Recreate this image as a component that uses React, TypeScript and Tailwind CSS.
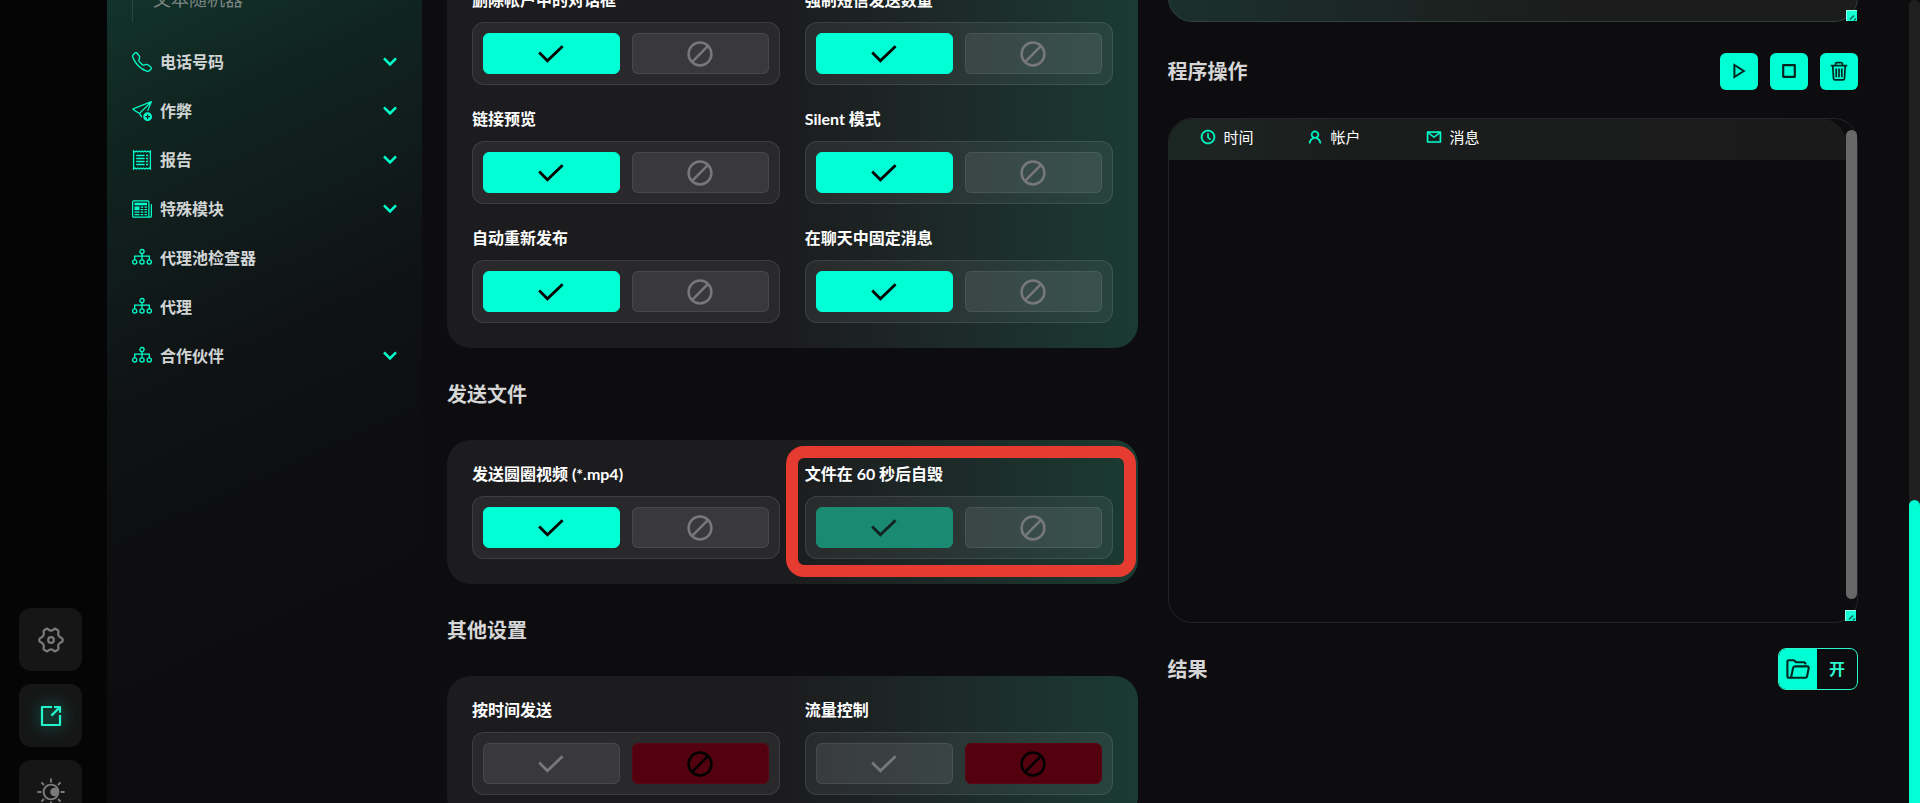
import type { ReactNode } from "react";
import { BsNewspaper, BsSendPlus, BsTelephone } from "react-icons/bs";
import { AiOutlineClockCircle, AiOutlineMail, AiOutlineUser } from "react-icons/ai";

function CheckIcon() {
  return (
    <svg viewBox="0 0 26 18" className="h-[18px] w-[26px]" fill="none" stroke="currentColor" strokeWidth="2.8" aria-hidden="true">
      <path d="M1.2 7.6 9.4 15.8 24.6 1.2" />
    </svg>
  );
}

function BanIcon() {
  return (
    <svg viewBox="0 0 26 26" className="h-[26px] w-[26px]" fill="none" stroke="currentColor" strokeWidth="2.5" aria-hidden="true">
      <circle cx="13" cy="13" r="11.4" />
      <path d="M5.2 20.8 20.8 5.2" />
    </svg>
  );
}

function ChevronIcon() {
  return (
    <svg viewBox="0 0 14 10" className="h-[10px] w-[14px]" fill="none" stroke="currentColor" strokeWidth="2.6" aria-hidden="true">
      <path d="M1 1.4 7 7.4 13 1.4" />
    </svg>
  );
}

function TreeIcon() {
  return (
    <svg viewBox="0 0 20 20" className="h-5 w-5" fill="none" stroke="currentColor" strokeWidth="1.3" aria-hidden="true">
      <circle cx="10" cy="3.6" r="2.1" />
      <circle cx="2.7" cy="14" r="2.1" />
      <circle cx="10" cy="14" r="2.1" />
      <circle cx="17.3" cy="14" r="2.1" />
      <path d="M10 5.700v6.200M2.700 11.900V8.200h14.600v3.700" />
    </svg>
  );
}

function ReportIcon() {
  return (
    <svg viewBox="0 0 20 20" className="h-5 w-5" fill="none" stroke="currentColor" strokeWidth="1.3" aria-hidden="true">
      <path d="M1.6 1 3 2 4.4 1 5.8 2 7.2 1 8.6 2 10 1 11.4 2 12.8 1 14.2 2 15.6 1 17 2 18.4 1V19L17 18 15.6 19 14.2 18 12.8 19 11.4 18 10 19 8.6 18 7.2 19 5.8 18 4.4 19 3 18 1.6 19Z" />
      <path d="M4.2 5.5h8.400M4.2 8.500h8.400M4.2 11.500h8.400M4.2 14.500h8.400M14 5.500h2.200M14 8.500h2.200M14 11.500h2.200M14 14.500h2.200" />
    </svg>
  );
}

function GearIcon() {
  return (
    <svg viewBox="0 0 26 26" className="h-[26px] w-[26px]" fill="none" stroke="currentColor" strokeWidth="2.2" strokeLinejoin="round" aria-hidden="true">
      <path d="M8.6 1.8C10 1.2 10.3 3.6 13 3.6S16 1.2 17.4 1.8L20 3.4C21.2 4.3 19.4 6.4 20.6 8.5S23.7 10.6 24.4 11.6Q25 13 24.4 14.4C23.7 15.4 21.8 15.4 20.6 17.5S21.2 21.7 20 22.6L17.4 24.2C16 24.8 15.7 22.4 13 22.4S10 24.8 8.6 24.2L6 22.6C4.8 21.7 6.6 19.6 5.4 17.5S2.3 15.4 1.6 14.4Q1 13 1.6 11.6C2.3 10.6 4.2 10.6 5.4 8.5S4.8 4.3 6 3.4Z" />
      <circle cx="13" cy="13" r="2.8" />
    </svg>
  );
}

function ShareIcon() {
  return (
    <svg viewBox="0 0 22 22" className="h-[22px] w-[22px] text-[#24f5cd] drop-shadow-[0_0_8px_rgba(0,255,204,0.7)]" fill="none" stroke="currentColor" strokeWidth="2.2" strokeLinejoin="round" aria-hidden="true">
      <path d="M12 2H2v18h18V10" />
      <path d="M11.4 10.6 19.6 2.4M14 2h6v5.8" />
    </svg>
  );
}

function SunIcon() {
  return (
    <svg viewBox="0 0 28 28" className="h-7 w-7" fill="none" stroke="currentColor" strokeWidth="1.9" aria-hidden="true">
      <circle cx="14" cy="14" r="7.4" />
      <circle cx="17.4" cy="14" r="4.2" fill="currentColor" stroke="none" />
      <path d="M14 .4v4M14 23.600v4M.4 14h4M23.600 14h4M4.400 4.400 7 7M21 21l2.600 2.600M4.400 23.600 7 21M21 7l2.600-2.600" />
    </svg>
  );
}

function PlayIcon() {
  return (
    <svg viewBox="0 0 14 16" className="h-4 w-[14px]" fill="none" stroke="currentColor" strokeWidth="2" aria-hidden="true">
      <path d="M2.400 2v12L11.800 8Z" />
    </svg>
  );
}

function StopIcon() {
  return (
    <svg viewBox="0 0 14 14" className="h-[14px] w-[14px]" fill="none" stroke="currentColor" strokeWidth="2.200" strokeLinejoin="round" aria-hidden="true">
      <path d="M1.200 1.200h11.600v11.600H1.200Z" />
    </svg>
  );
}

function TrashIcon() {
  return (
    <svg viewBox="0 0 18 20" className="h-5 w-[18px]" fill="none" stroke="currentColor" strokeWidth="1.700" aria-hidden="true">
      <path d="M.8 4.600h16.400M5.600 4.400V2.600Q5.600 1.600 6.800 1.600h4.400q1.200 0 1.200 1v1.800M2.800 5l.7 12.400q.1 1.400 1.500 1.400h8q1.400 0 1.500-1.400L15.200 5M6.200 7.400v8.800M9 7.400v8.800M11.800 7.400v8.800" />
    </svg>
  );
}

function FolderIcon() {
  return (
    <svg viewBox="0 0 24 20" className="h-5 w-6" fill="none" stroke="currentColor" strokeWidth="2.100" strokeLinejoin="round" aria-hidden="true">
      <path d="M5 18.800H3.200Q1.400 18.800 1.400 17V2.800Q1.400 1.200 3 1.200h4.200q.8 0 1.400.6l1.400 1.400h7.600q1.800 0 1.800 1.800v.6" />
      <path d="M5 18.800 7 9.200Q7.400 7.400 9 7.400h12.200q1.900 0 1.500 1.900l-1.600 7.900q-.3 1.600-2 1.600Z" />
    </svg>
  );
}

function ResizeGrip() {
  return (
    <svg viewBox="0 0 11 11" className="absolute right-px bottom-px h-[11px] w-[11px]" aria-hidden="true">
      <path d="M0 0h11v11H0Z" fill="#15ffd5" />
      <path d="M.5 11V.5H11" fill="none" stroke="#9affec" />
      <path d="M4 9.500 8 5.500M8 10.500l2-2" stroke="#075c4c" strokeWidth="1.400" />
    </svg>
  );
}

type State = "on" | "off" | "dim";

function Toggle({ label, state = "on" }: { label: string; state?: State }) {
  const yes = {
    on: "border-[#00ffd4] bg-[#00ffd4] text-black",
    dim: "border-[#1b8a72] bg-[#1b8a72] text-[#12231f]",
    off: "border-white/8 bg-white/8 text-[#777879]",
  }[state];
  const no = state === "off" ? "border-[#5e0414] bg-[#53000f] text-black" : "border-white/8 bg-white/8 text-[#777879]";
  return (
    <div role="group" aria-label={label}>
      <p className="mb-[14px] text-base leading-[17px] font-bold text-white">{label}</p>
      <div className="grid grid-cols-2 gap-3 rounded-xl border border-white/10 bg-white/6 p-[10px]">
        <button type="button" aria-label="是" aria-pressed={state !== "off"} className={`flex h-[41px] items-center justify-center rounded-md border ${yes}`}>
          <CheckIcon />
        </button>
        <button type="button" aria-label="否" aria-pressed={state === "off"} className={`flex h-[41px] items-center justify-center rounded-md border ${no}`}>
          <BanIcon />
        </button>
      </div>
    </div>
  );
}

function Card({ children }: { children: ReactNode }) {
  return (
    <section className="grid grid-cols-2 gap-[25px] rounded-3xl bg-linear-to-r from-[#1c1c1e] from-50% via-[#1c2b29] via-75% to-[#1a3b32] p-[25px]">
      {children}
    </section>
  );
}

function Heading({ children }: { children: ReactNode }) {
  return <h2 className="flex items-center text-xl leading-5 font-bold text-[#d6d6d6]">{children}</h2>;
}

const menu: { label: string; icon: ReactNode; open?: boolean }[] = [
  { label: "电话号码", icon: <BsTelephone className="h-5 w-5" />, open: true },
  { label: "作弊", icon: <BsSendPlus className="h-5 w-5" />, open: true },
  { label: "报告", icon: <ReportIcon />, open: true },
  { label: "特殊模块", icon: <BsNewspaper className="h-5 w-5" />, open: true },
  { label: "代理池检查器", icon: <TreeIcon /> },
  { label: "代理", icon: <TreeIcon /> },
  { label: "合作伙伴", icon: <TreeIcon />, open: true },
];

function RailButton({ label, children }: { label: string; children: ReactNode }) {
  return (
    <button type="button" aria-label={label} className="flex size-[63px] shrink-0 items-center justify-center rounded-xl bg-[#161616] text-[#7b7b7b]">
      {children}
    </button>
  );
}

const action = "flex h-[37px] w-[38px] items-center justify-center rounded-md bg-[#00ffd4] text-[#03251f]";

export default function App() {
  return (
    <div className="flex h-screen overflow-hidden bg-[#0d0d0f] font-['Lato','Noto_Sans_CJK_SC',sans-serif]">
      <aside className="flex w-[107px] shrink-0 flex-col justify-end bg-[#050505] pl-[19px]">
        <div className="-mb-5 flex flex-col gap-[13px]">
          <RailButton label="设置"><GearIcon /></RailButton>
          <RailButton label="分享"><ShareIcon /></RailButton>
          <RailButton label="主题"><SunIcon /></RailButton>
        </div>
      </aside>

      <nav className="w-[315px] shrink-0 bg-[linear-gradient(155deg,#12332b_0%,#10241f_16%,#101b1b_30%,#0f1314_42%,#0e0f10_54%,#0d0d0f_75%)] px-[25px]">
        <div className="-mt-3 flex h-[34px] border-l border-white/10 pl-5">
          <a href="#random" className="text-lg leading-[22px] font-normal text-[#7c8583]">文本随机器</a>
        </div>
        <ul className="mt-[15px]">
          {menu.map((item) => (
            <li key={item.label}>
              <a href="#menu" className="flex h-[49px] items-center text-[#00ffcc]">
                {item.icon}
                <span className="ml-2 flex-1 text-base font-bold text-[#d0d4d4]">{item.label}</span>
                {item.open && <ChevronIcon />}
              </a>
            </li>
          ))}
        </ul>
      </nav>

      <main className="grid flex-1 grid-cols-2 gap-[30px] pr-[51px] pl-[25px]">
        <div className="-mt-[34px]">
          <Card>
            <Toggle label="删除帐户中的对话框" />
            <Toggle label="强制短信发送数量" />
            <Toggle label="链接预览" />
            <Toggle label="Silent 模式" />
            <Toggle label="自动重新发布" />
            <Toggle label="在聊天中固定消息" />
          </Card>
          <div className="flex h-[92px] items-center"><Heading>发送文件</Heading></div>
          <div className="relative">
            <Card>
              <Toggle label="发送圆圈视频 (*.mp4)" />
              <Toggle label="文件在 60 秒后自毁" state="dim" />
            </Card>
            <div className="pointer-events-none absolute top-[6px] right-[2px] bottom-[7px] left-[339px] rounded-[18px] border-[12px] border-[#e63b31]" />
          </div>
          <div className="flex h-[92px] items-center"><Heading>其他设置</Heading></div>
          <Card>
            <Toggle label="按时间发送" state="off" />
            <Toggle label="流量控制" state="off" />
          </Card>
        </div>

        <div>
          <div className="relative -mt-10 h-[62px]">
            <textarea aria-label="消息文本" className="block h-full w-full resize-none rounded-3xl border border-[#30403c] bg-linear-to-r from-[#1a302d] to-[#1b1c1b] to-60%" />
            <ResizeGrip />
          </div>
          <div className="flex h-24 items-center justify-between pt-[2px]">
            <Heading>程序操作</Heading>
            <div className="flex gap-3">
              <button type="button" aria-label="开始" className={action}><PlayIcon /></button>
              <button type="button" aria-label="停止" className={action}><StopIcon /></button>
              <button type="button" aria-label="删除" className={action}><TrashIcon /></button>
            </div>
          </div>
          <div className="relative h-[505px] rounded-3xl border border-[#242526]">
            <div className="mr-[11px] h-[41px] overflow-hidden rounded-t-3xl bg-linear-to-r from-[#1c2724] via-[#1b1d1d] via-25% to-[#1a1a1b]">
              <table className="w-full table-fixed text-left text-[15px] leading-5 text-white">
                <colgroup>
                  <col className="w-[138px]" />
                  <col className="w-[119px]" />
                  <col />
                </colgroup>
                <thead>
                  <tr>
                    <th className="py-2 pl-[31px] font-normal">
                      <span className="flex items-center gap-2"><AiOutlineClockCircle strokeWidth="36" className="size-4 text-[#00ffcc]" />时间</span>
                    </th>
                    <th className="font-normal">
                      <span className="flex items-center gap-2"><AiOutlineUser strokeWidth="36" className="size-4 text-[#00ffcc]" />帐户</span>
                    </th>
                    <th className="font-normal">
                      <span className="flex items-center gap-2"><AiOutlineMail strokeWidth="36" className="size-4 text-[#00ffcc]" />消息</span>
                    </th>
                  </tr>
                </thead>
              </table>
            </div>
            <div className="absolute top-[11px] right-0 bottom-[23px] w-[11px] rounded-full bg-[#686868]" />
            <ResizeGrip />
          </div>
          <div className="flex h-[92px] items-center justify-between">
            <Heading>结果</Heading>
            <button type="button" className="flex h-[42px] w-20 overflow-hidden rounded-lg border border-[#2cf7d0] text-base font-bold text-[#2cf7d0]">
              <span className="flex h-full w-[38px] items-center justify-center bg-[#00ffd4] text-[#03251f]"><FolderIcon /></span>
              <span className="flex h-full flex-1 items-center justify-center">开</span>
            </button>
          </div>
        </div>
      </main>

      <div className="flex w-[11px] shrink-0 flex-col justify-end rounded-t-full bg-[#202020]">
        <div className="h-[303px] rounded-t-full bg-[#00ffd4]" />
      </div>
    </div>
  );
}
